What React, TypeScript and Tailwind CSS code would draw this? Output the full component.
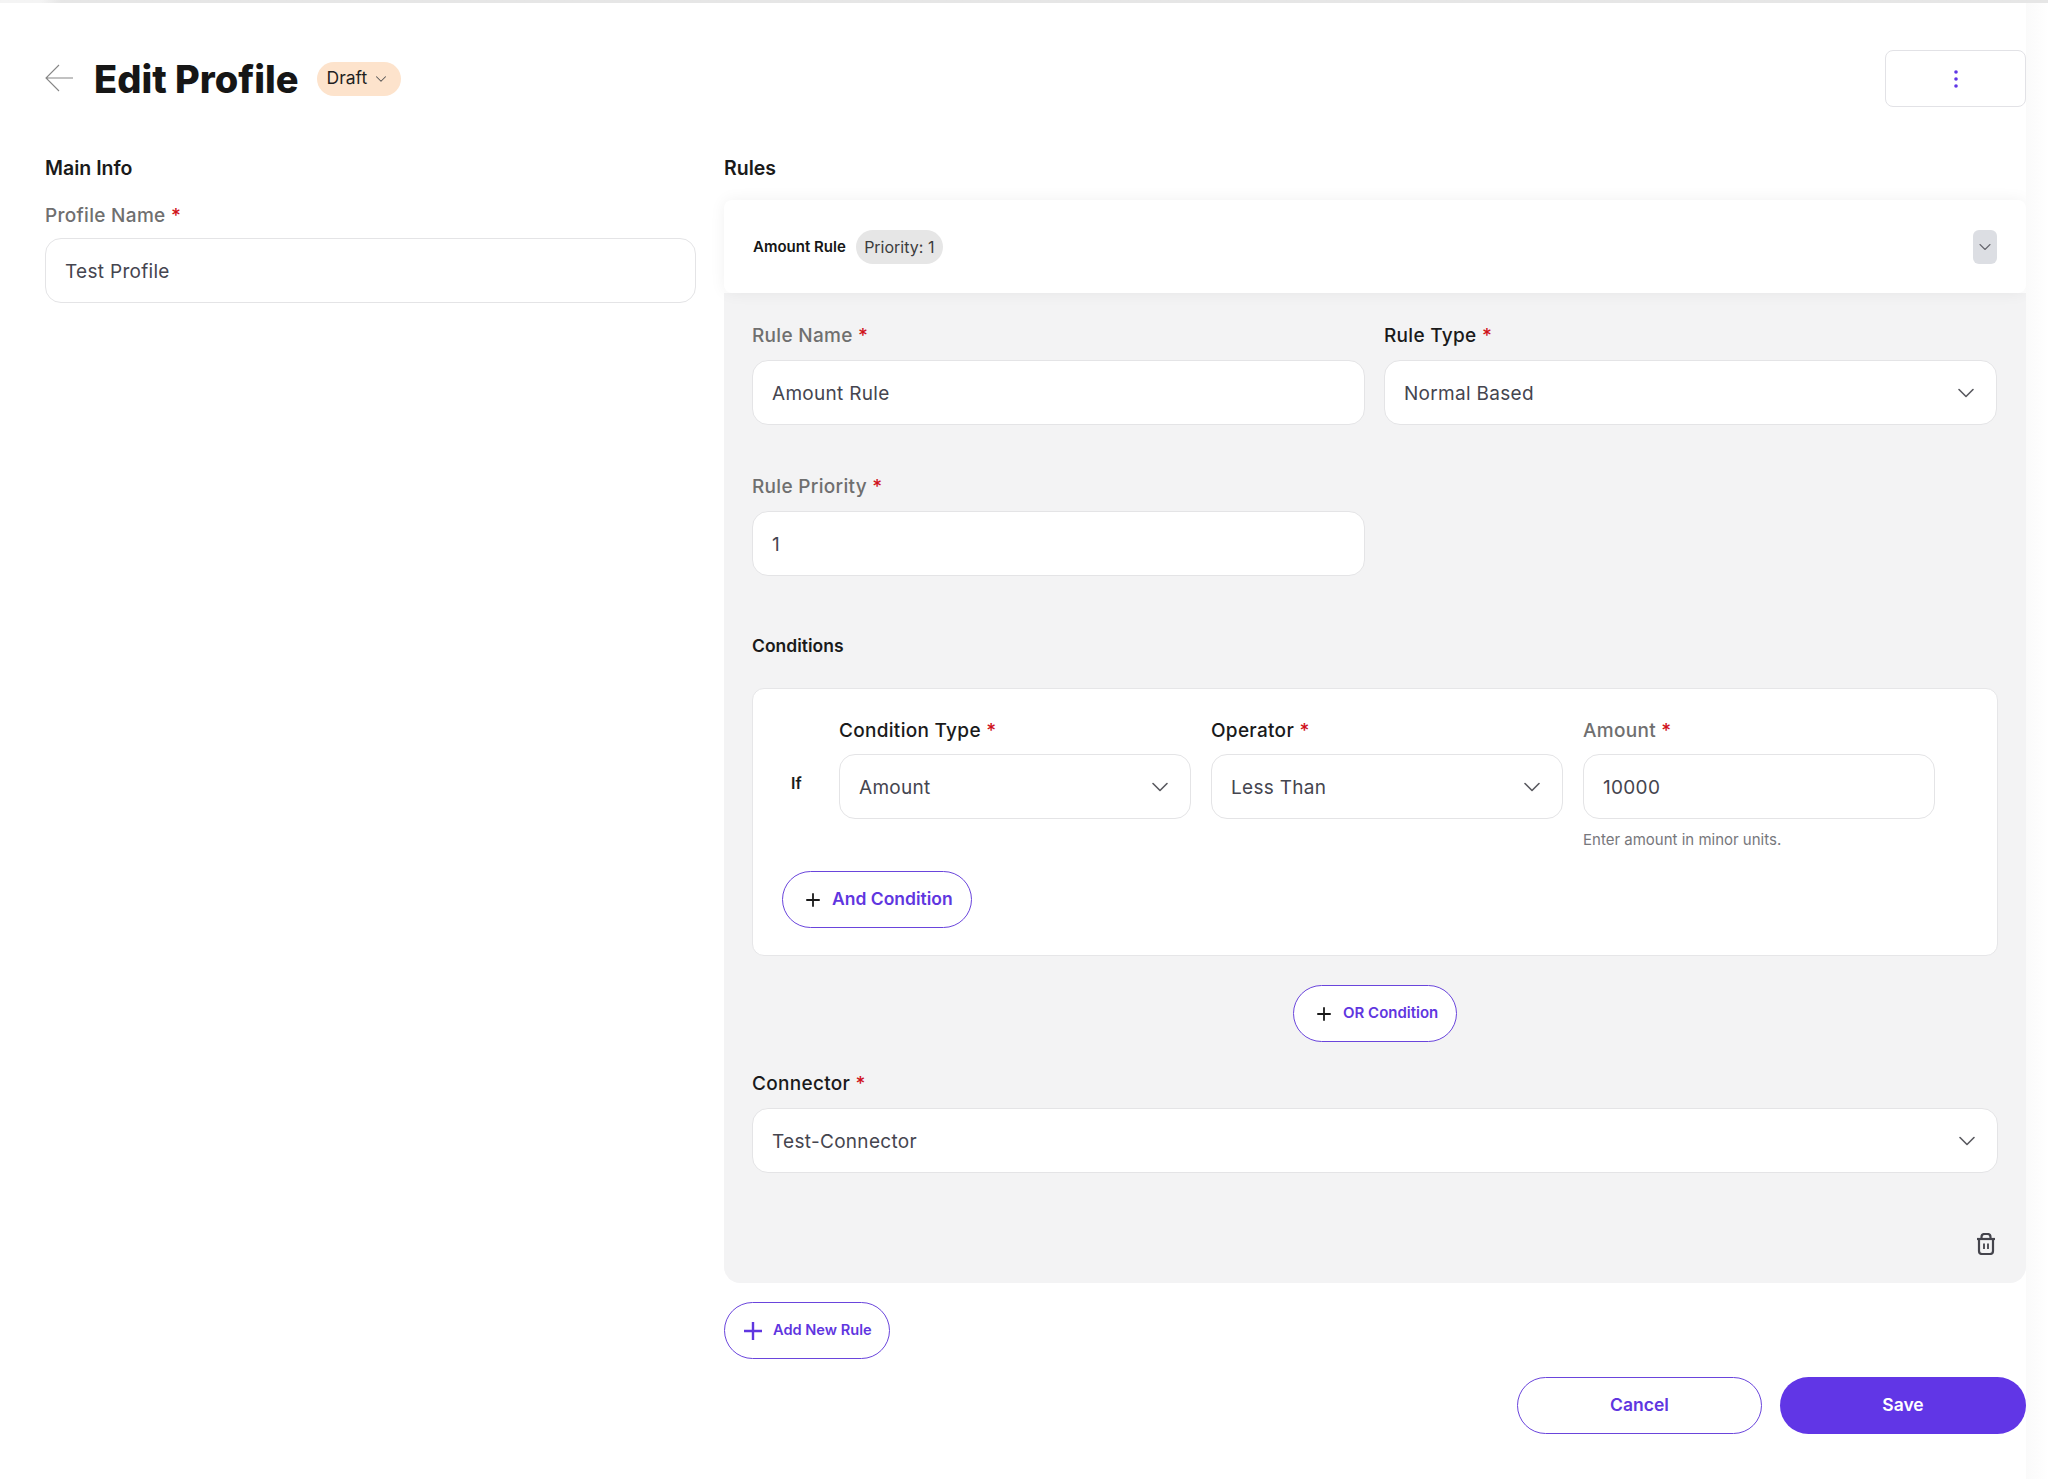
import React from "react";
import { ChevronDown } from "lucide-react";

function Label({ text, dark }: { text: string; dark?: boolean }) {
  return (
    <div className={`h-[28px] text-[19px] leading-[30px] tracking-[0.3px] font-medium ${dark ? "text-[#1a1a1a]" : "text-[#6f6f6f]"}`}>
      {text} <span className="text-[#d0121b]">*</span>
    </div>
  );
}

function TextBox({ value, className = "" }: { value: string; className?: string }) {
  return (
    <div className={`flex h-[65px] items-center rounded-[16px] border border-[#e4e4e6] bg-white px-[19px] text-[19px] tracking-[0.3px] text-[#45454f] ${className}`}>
      <span className="translate-y-[1.5px]">{value}</span>
    </div>
  );
}

function SelectBox({ value }: { value: string }) {
  return (
    <div className="flex h-[65px] items-center justify-between rounded-[16px] border border-[#e4e4e6] bg-white pl-[19px] pr-[16px] text-[19px] tracking-[0.3px] text-[#45454f]">
      <span className="translate-y-[1.5px]">{value}</span>
      <ChevronDown className="h-[28px] w-[28px] text-[#5a5a60]" strokeWidth={1.4} />
    </div>
  );
}

function Plus({ className }: { className: string }) {
  return (
    <svg viewBox="0 0 20 20" fill="none" stroke="currentColor" strokeWidth="2" className={className}>
      <path d="M10 2.5v15M2.5 10h15" />
    </svg>
  );
}

function Trash() {
  return (
    <svg viewBox="0 0 20 22" fill="none" stroke="#44444c" strokeWidth="2.2" className="h-[22px] w-[20px]">
      <path d="M1 6h18" />
      <path d="M5.5 6V4a3 3 0 0 1 3-3h3a3 3 0 0 1 3 3v2" />
      <path d="M3 6v12a3 3 0 0 0 3 3h8a3 3 0 0 0 3-3V6" />
      <path d="M8 10.5v5.5M12 10.5v5.5" strokeWidth="1.8" />
    </svg>
  );
}

export default function App() {
  return (
    <div className="min-h-[1479px] w-[2048px] bg-white font-['Inter','Liberation_Sans',sans-serif] text-[#1a1a1a] relative overflow-hidden">
      <div className="h-[3px] bg-gradient-to-r from-[#f4f4f4] from-[2%] to-[#e6e6e6] to-[3%]" />
      <div className="pl-[45px] pr-[22px]">
        <div className="flex h-[57px] mt-[47px] items-center justify-between">
          <div className="flex items-center">
            <svg viewBox="0 0 28 28" fill="none" stroke="#868686" strokeWidth="1.1" className="h-[28px] w-[28px] -translate-y-[1px]">
              <path d="M28 14H1M14 1 1 14l13 13" />
            </svg>
            <h1 className="ml-[21px] text-[38px] leading-[44px] font-extrabold text-[#161616]">Edit Profile</h1>
            <div className="ml-[18px] flex h-[34px] w-[84px] items-center rounded-full bg-[#fde3cc] pl-[10px] text-[17.5px] text-[#1f1f1f]">
              <span>Draft</span>
              <ChevronDown className="ml-[5px] h-[18px] w-[18px] text-[#555]" strokeWidth={1.4} />
            </div>
          </div>
          <div className="flex h-[57px] w-[141px] items-center justify-center rounded-[8px] border border-[#e2e2e6] bg-white">
            <svg viewBox="0 0 4 20" fill="#5f36e6" className="h-[20px] w-[4px]">
              <circle cx="2" cy="3" r="1.8" />
              <circle cx="2" cy="10" r="1.8" />
              <circle cx="2" cy="17" r="1.8" />
            </svg>
          </div>
        </div>

        <div className="mt-[46px] grid grid-cols-[651px_1302px] gap-[28px]">
          <div>
            <div className="h-[28px] text-[19.5px] leading-[30px] font-semibold">Main Info</div>
            <div className="mt-[20px]"><Label text="Profile Name" /></div>
            <TextBox value="Test Profile" className="mt-[9px]" />
          </div>

          <div>
            <div className="h-[28px] text-[19.5px] leading-[30px] font-semibold">Rules</div>
            <div className="mt-[19px] flex h-[93px] items-center rounded-[8px] bg-white pl-[29px] pr-[29px] shadow-[0_0_16px_rgba(0,0,0,0.06)] relative">
              <span className="translate-y-[1px] text-[15px] font-semibold text-[#161616]">Amount Rule</span>
              <span className="ml-[10px] flex h-[34px] w-[87px] items-center justify-center rounded-full bg-[#e6e6e6] text-[16px] text-[#3c3c3c]">Priority: 1</span>
              <span className="ml-auto flex h-[34px] w-[24px] items-center justify-center rounded-[6px] bg-[#dcdee3]">
                <ChevronDown className="h-[20px] w-[20px] text-[#66666e]" strokeWidth={1.3} />
              </span>
            </div>

            <div className="rounded-b-[16px] bg-[#f3f3f4] px-[28px] pb-[28px] pt-[28px]">
              <div className="grid grid-cols-[613px_613px] gap-x-[19px]">
                <div>
                  <Label text="Rule Name" />
                  <TextBox value="Amount Rule" className="mt-[11px]" />
                </div>
                <div>
                  <Label text="Rule Type" dark />
                  <div className="mt-[11px]"><SelectBox value="Normal Based" /></div>
                </div>
                <div className="mt-[47px]">
                  <Label text="Rule Priority" />
                  <TextBox value="1" className="mt-[11px]" />
                </div>
              </div>

              <div className="mt-[59px] h-[24px] text-[17.5px] leading-[22px] font-semibold">Conditions</div>

              <div className="mt-[29px] h-[268px] rounded-[12px] border border-[#e6e6e8] bg-white pl-[29px] pt-[27px]">
                <div className="flex">
                  <div className="ml-[9px] mt-[53px] w-[48px] text-[16px] font-semibold leading-[28px]">If</div>
                  <div className="grid grid-cols-[352px_352px_352px] gap-x-[20px]">
                    <div>
                      <Label text="Condition Type" dark />
                      <div className="mt-[10px]"><SelectBox value="Amount" /></div>
                    </div>
                    <div>
                      <Label text="Operator" dark />
                      <div className="mt-[10px]"><SelectBox value="Less Than" /></div>
                    </div>
                    <div>
                      <Label text="Amount" />
                      <TextBox value="10000" className="mt-[10px]" />
                      <div className="mt-[11px] h-[20px] text-[15px] leading-[20px] text-[#77777c]">Enter amount in minor units.</div>
                    </div>
                  </div>
                </div>
                <div className="mt-[21px] flex h-[57px] w-[190px] items-center rounded-full border border-[#6a45dc] bg-white pl-[21px] text-[#5f36e0]">
                  <Plus className="h-[18px] w-[18px] text-[#1a1a1a]" />
                  <span className="ml-[10px] text-[17.5px] leading-[24px] -translate-y-[1px] font-semibold">And Condition</span>
                </div>
              </div>

              <div className="mt-[29px] flex justify-center">
                <div className="flex h-[57px] w-[164px] items-center rounded-full border border-[#6a45dc] bg-white pl-[21px] text-[#5f36e0]">
                  <Plus className="h-[18px] w-[18px] text-[#1a1a1a]" />
                  <span className="ml-[10px] text-[15px] leading-[20px] -translate-y-[1px] font-semibold">OR Condition</span>
                </div>
              </div>

              <div className="mt-[27px]"><Label text="Connector" dark /></div>
              <div className="mt-[11px]"><SelectBox value="Test-Connector" /></div>

              <div className="mt-[60px] flex justify-end pr-[2px]"><Trash /></div>
            </div>

            <div className="mt-[19px] flex h-[57px] w-[166px] items-center rounded-full border border-[#6a45dc] bg-white pl-[16px] text-[#5f36e0]">
              <Plus className="h-[24px] w-[24px]" />
              <span className="ml-[8px] text-[14.6px] leading-[20px] -translate-y-[1px] font-semibold">Add New Rule</span>
            </div>

            <div className="mt-[18px] flex justify-end gap-[18px]">
              <div className="flex h-[57px] w-[245px] items-center justify-center rounded-full border border-[#6a45dc] bg-white text-[17.5px] font-semibold text-[#5f36e0]">Cancel</div>
              <div className="flex h-[57px] w-[246px] items-center justify-center rounded-full bg-[#6136e6] text-[17.5px] font-semibold text-white">Save</div>
            </div>
          </div>
        </div>
      </div>
      <div className="absolute right-0 top-[3px] bottom-0 w-[22px] bg-gradient-to-r from-[#fafafa] to-white" />
    </div>
  );
}
